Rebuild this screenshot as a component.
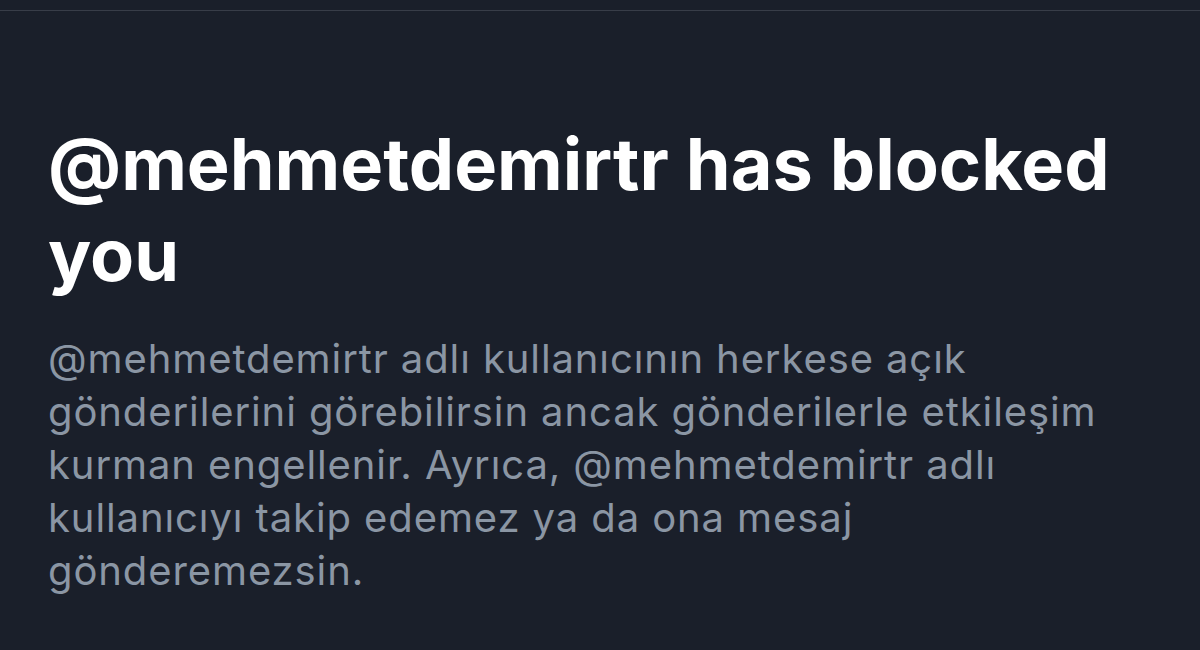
export default function App() {
  return (
    <div className="h-[650px] w-[1200px] overflow-hidden bg-[#1a1f2a] pt-[10px]">
      <div className="h-px w-full bg-[#383d48]" />

      <main className="pl-[48px] pr-[40px] pt-[107px]" style={{ fontFamily: 'Inter, "Liberation Sans", sans-serif' }}>
        <h1 className="text-[72px] font-bold leading-[91px] text-white">
          @mehmetdemirtr has blocked you
        </h1>

        <p className="mt-[32px] max-w-[1110px] text-[40px] leading-[53px] tracking-[0.9px] text-[#8b96a4]">
          @mehmetdemirtr adlı kullanıcının herkese açık gönderilerini görebilirsin ancak gönderilerle etkileşim kurman
          engellenir. Ayrıca, @mehmetdemirtr adlı kullanıcıyı takip edemez ya da ona mesaj gönderemezsin.
        </p>
      </main>
    </div>
  )
}
